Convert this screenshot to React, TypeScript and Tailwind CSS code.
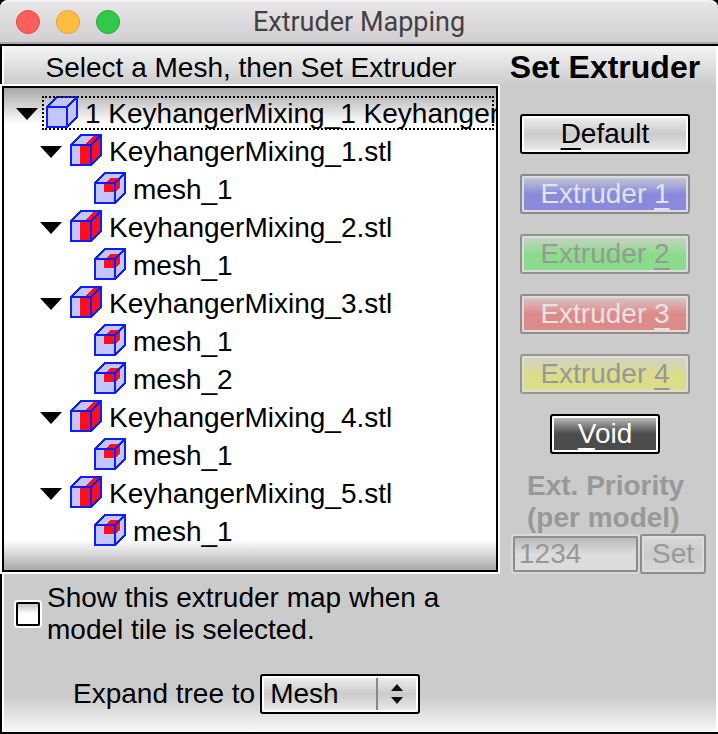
import { useState } from 'react';
import type { ReactNode } from 'react';

interface TreeNode {
    label: string;
    kind: 'group' | 'model' | 'mesh';
    children?: TreeNode[];
}

const model = (n: number, meshes: number): TreeNode => ({
    label: `KeyhangerMixing_${n}.stl`,
    kind: 'model',
    children: Array.from({ length: meshes }, (_, i) => ({ label: `mesh_${i + 1}`, kind: 'mesh' as const })),
})

const tree: TreeNode = {
    label: '1 KeyhangerMixing_1 Keyhanger',
    kind: 'group',
    children: [model(1, 1), model(2, 1), model(3, 2), model(4, 1), model(5, 1)],
}

const indents = {
    group: 'pl-3',
    model: 'pl-9',
    mesh: 'pl-[90px]',
}

const extruders = [
    { n: 1, style: 'border-[#8a8a96] from-[#cbcbd0] to-[#8a8adc] text-[#e2e2ea]' },
    { n: 2, style: 'border-[#8a968a] from-[#cbd0cb] to-[#8adc8a] text-[#989898]' },
    { n: 3, style: 'border-[#968a8a] from-[#d0cbcb] to-[#dc8a8a] text-[#e8e2e2]' },
    { n: 4, style: 'border-[#96968a] from-[#d0d0cb] to-[#dcdc8a] text-[#989898]' },
]

const Cube = ({ kind }: { kind: TreeNode['kind'] }) => (
    <svg className="mt-px size-8 shrink-0" viewBox="0 0 32 32" shapeRendering="crispEdges" aria-hidden="true">
        <path d="M1 11 11 1H31V21L21 31H1Z" fill="#c4c4ff" />
        {kind === 'model' && <path d="M10 31V11H14L24 1H31V21L21 31Z" fill="#ff0f1e" />}
        {kind === 'mesh' && <path d="M10 20V11H12L16 6H26V15L21 20Z" fill="#ff0f1e" />}
        <path d="M1 11H21V31H1ZM1 11 11 1H31V21L21 31M21 11 31 1" fill="none" stroke="#0a1eff" strokeWidth="2" />
    </svg>
)

const TreeItem = ({ node }: { node: TreeNode }) => {

    const [open, setOpen] = useState(true)

    return (
        <li role="treeitem" aria-expanded={node.children ? open : undefined}>
            <div className={`flex h-[38px] ${indents[node.kind]}`}>
                {node.children && (
                    <button
                        type="button"
                        aria-label={`Toggle ${node.label}`}
                        onClick={() => setOpen(!open)}
                        className={`flex shrink-0 items-center ${node.kind === 'group' ? 'mr-1' : 'mr-2'}`}>
                        <svg className={`h-3 w-[22px] ${open ? '' : '-rotate-90'}`} viewBox="0 0 22 12">
                            <path d="M0 0H22L11 12Z" />
                        </svg>
                    </button>
                )}
                {node.kind === 'group' ? (
                    <div className="relative mr-0.5 flex min-w-0 flex-1 gap-[7px] pl-1">
                        <Cube kind={node.kind} />
                        <span className="whitespace-nowrap">{node.label}</span>
                        <div className="pointer-events-none absolute inset-x-0 top-px h-[34px] border-2 border-dotted border-black" />
                    </div>
                ) : (
                    <div className="flex gap-[7px]">
                        <Cube kind={node.kind} />
                        <span>{node.label}</span>
                    </div>
                )}
            </div>
            {node.children && open && (
                <ul role="group">
                    {node.children.map((child) => <TreeItem key={child.label} node={child} />)}
                </ul>
            )}
        </li>
    )
}

interface PushButtonProps {
    className: string;
    disabled?: boolean;
    children: ReactNode;
}

const PushButton = ({ className, disabled, children }: PushButtonProps) => (
    <button
        type="button"
        disabled={disabled}
        className={`h-10 rounded-[3px] border-2 bg-linear-to-b leading-9 ${className}`}>
        {children}
    </button>
)

const Key = ({ children }: { children: ReactNode }) => (
    <span className="underline decoration-2 underline-offset-[5px]">{children}</span>
)

const TitleBar = () => (
    <header className="relative flex h-[46px] items-center rounded-t-lg border-b-2 border-black bg-linear-to-b from-[#e9e6e9] to-[#d0cdd0] px-4 shadow-[inset_0_2px_#f4f2f4,inset_0_-2px_#aaa8aa]">
        <div className="flex gap-4">
            <button type="button" aria-label="Close" className="size-6 rounded-full border border-[#e2463f] bg-[#ff5f5a]" />
            <button type="button" aria-label="Minimize" className="size-6 rounded-full border border-[#e0a032] bg-[#ffbe41]" />
            <button type="button" aria-label="Zoom" className="size-6 rounded-full border border-[#1fad31] bg-[#32c84b]" />
        </div>
        <h1 className="pointer-events-none absolute inset-x-0 text-center font-['Roboto',sans-serif] text-[27px] text-[#434043]">
            Extruder Mapping
        </h1>
    </header>
)

const App = () => {

    const [showMap, setShowMap] = useState(false)
    const [level, setLevel] = useState('Mesh')

    return (
        <div className="bg-black font-['Liberation_Sans',Arial,sans-serif] text-[28px] text-black">
            <TitleBar />
            <main className="flex border-b-2 border-black bg-[linear-gradient(to_bottom,#f4f4f4,#cbcbcb_40px,#cbcbcb_calc(100%-36px),#f8f8f8)]">
                <div className="min-w-0 flex-1">
                    <h2 className="h-[38px] border-l-2 border-black pt-1.5 text-center leading-8 shadow-[inset_2px_0_white]">
                        Select a Mesh, then Set Extruder
                    </h2>
                    <div className="border-2 border-white">
                        <ul
                            role="tree"
                            className="overflow-hidden border-2 border-black bg-[linear-gradient(to_bottom,#a8a8a8,white_36px,white_calc(100%-30px),#a8a8a8)] pt-[7px] pb-[19px] leading-[38px]">
                            <TreeItem node={tree} />
                        </ul>
                    </div>
                    <div className="border-l-2 border-black pt-2 pb-[18px] shadow-[inset_2px_0_white]">
                        <label className="flex items-center gap-[5px] pl-3 leading-8">
                            <input
                                type="checkbox"
                                checked={showMap}
                                onChange={(e) => setShowMap(e.target.checked)}
                                className="m-0.5 size-6 shrink-0 appearance-none rounded-[2px] border-2 border-black bg-linear-to-b from-[#c4c4c4] to-white to-50% shadow-[0_0_0_2px_white] checked:bg-black" />
                            <span>Show this extruder map when a model tile is selected.</span>
                        </label>
                        <div className="mt-7 flex items-center pl-[71px] leading-10">
                            <label htmlFor="level">Expand tree to</label>
                            <div className="relative ml-[5px]">
                                <select
                                    id="level"
                                    value={level}
                                    onChange={(e) => setLevel(e.target.value)}
                                    className="block h-10 w-40 appearance-none rounded-[3px] border-2 border-black bg-linear-to-b from-[#f0f0f0] via-[#cbcbcb] to-[#ececec] pl-2 leading-9 shadow-[inset_0_0_0_2px_white]">
                                    <option>Mesh</option>
                                    <option>Model</option>
                                    <option>Group</option>
                                </select>
                                <div className="pointer-events-none absolute inset-y-1 right-1 flex w-10 items-center justify-center border-l-2 border-[#888]">
                                    <svg className="h-5 w-3" viewBox="0 0 12 20">
                                        <path d="M0 7 6 0 12 7ZM0 13H12L6 20Z" fill="#111" />
                                    </svg>
                                </div>
                            </div>
                        </div>
                    </div>
                </div>
                <aside className="w-[218px] shrink-0 border-r-2 border-white">
                    <div className="flex flex-col items-center gap-5 pr-1.5">
                        <h2 className="mb-1.5 text-[32px] leading-[42px] font-bold">Set Extruder</h2>
                        <PushButton className="w-[170px] border-black from-[#f0f0f0] via-[#cbcbcb] to-[#ececec] shadow-[inset_0_0_0_2px_white]">
                            <Key>D</Key>efault
                        </PushButton>
                        {extruders.map(({ n, style }) => (
                            <PushButton key={n} disabled className={`w-[170px] to-50% shadow-[inset_0_0_0_2px_#dcdcdc] ${style}`}>
                                Extruder <Key>{n}</Key>
                            </PushButton>
                        ))}
                        <PushButton className="w-[110px] border-black from-[#c8c8c8] to-[#4c4c4c] to-50% text-white shadow-[inset_0_0_0_2px_white]">
                            <Key>V</Key>oid
                        </PushButton>
                    </div>
                    <div className="mt-4 pr-2.5 pl-[11px] text-[#989898]">
                        <label htmlFor="priority" className="block pl-4 leading-8 font-bold">
                            Ext. Priority (per model)
                        </label>
                        <div className="flex">
                            <input
                                id="priority"
                                type="text"
                                disabled
                                defaultValue="1234"
                                className="m-0.5 h-9 min-w-0 flex-1 rounded-[2px] border-2 border-[#8c8c8c] bg-linear-to-b from-[#bababa] to-[#dcdcdc] to-50% px-1 shadow-[0_0_0_2px_#d8d8d8]" />
                            <PushButton disabled className="w-[66px] border-[#8c8c8c] from-[#d8d8d8] via-[#cbcbcb] to-[#d8d8d8] shadow-[inset_0_0_0_2px_#dcdcdc]">
                                Set
                            </PushButton>
                        </div>
                    </div>
                </aside>
            </main>
        </div>
    )
}

export default App
